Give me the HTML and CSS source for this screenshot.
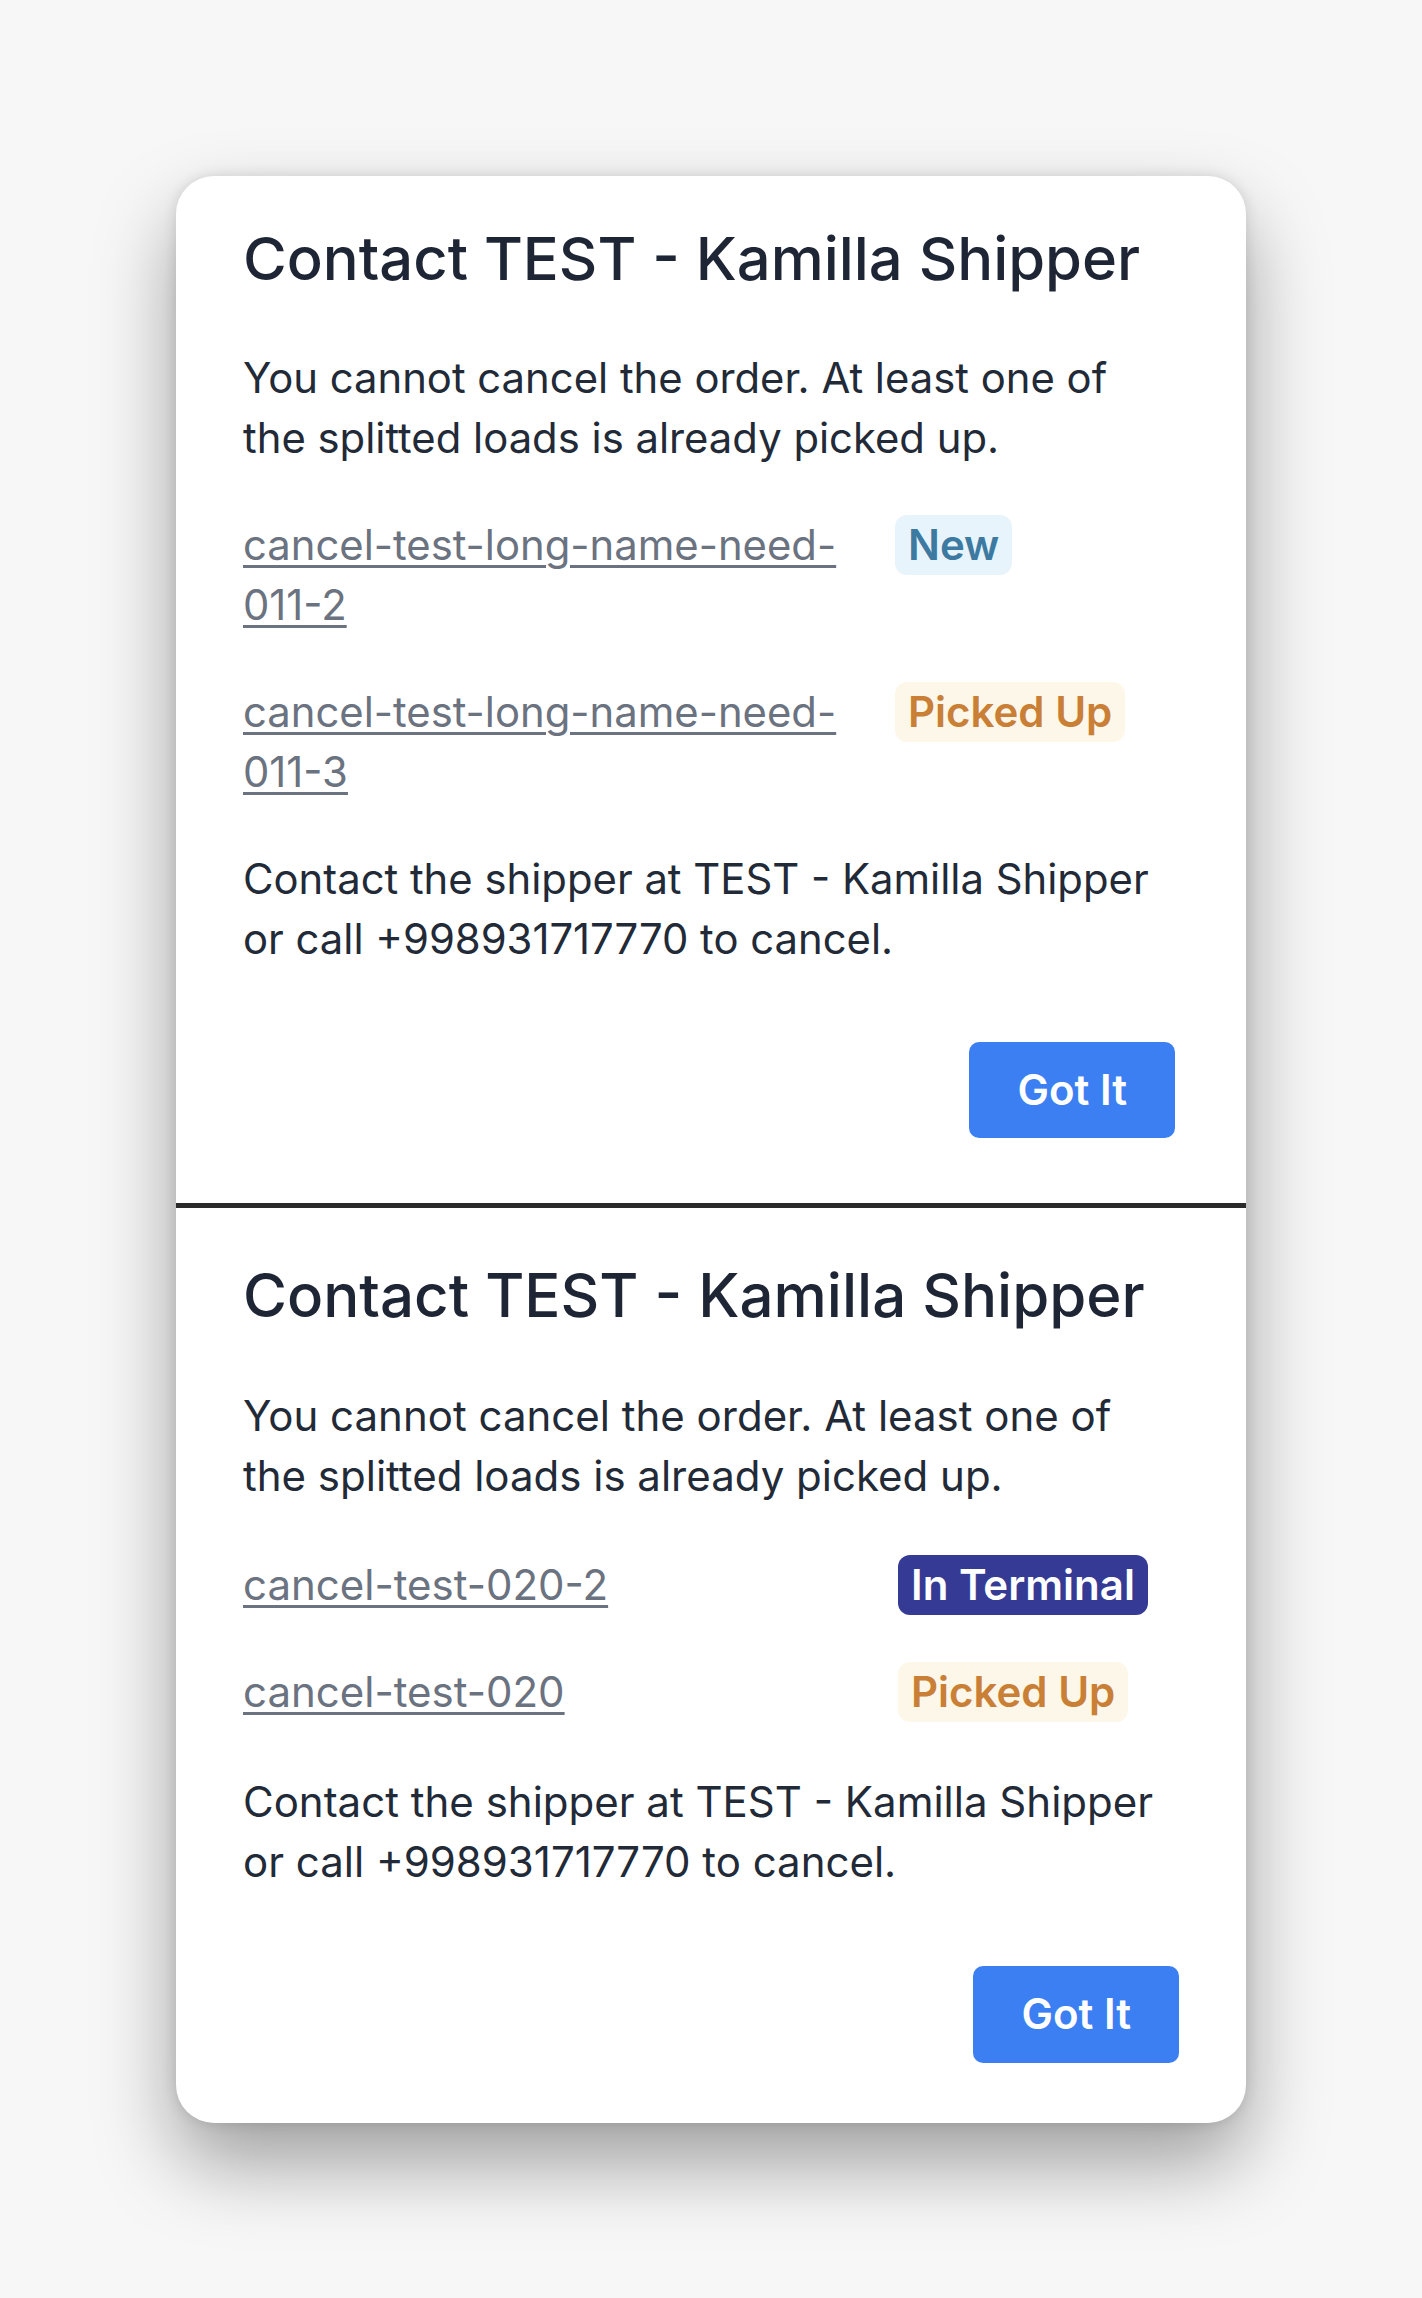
FILE: index.html
```html
<!DOCTYPE html>
<html lang="en">
<head>
<meta charset="utf-8">
<title>Contact TEST - Kamilla Shipper</title>
<link rel="stylesheet" href="styles.css">
</head>
<body>
<main class="page">
  <div class="card">
    <section class="dialog dialog--first">
      <h2 class="dialog-title">Contact TEST - Kamilla Shipper</h2>
      <p class="dialog-text">You cannot cancel the order. At least one of the splitted loads is already picked up.</p>
      <ul class="loads">
        <li class="load-row">
          <a class="load-link" href="#">cancel-test-long-name-need-<wbr>011-2</a>
          <span class="badge badge--new">New</span>
        </li>
        <li class="load-row">
          <a class="load-link" href="#">cancel-test-long-name-need-<wbr>011-3</a>
          <span class="badge badge--picked">Picked Up</span>
        </li>
      </ul>
      <p class="dialog-text dialog-contact">Contact the shipper at TEST - Kamilla Shipper or call +998931717770 to cancel.</p>
      <div class="dialog-actions">
        <button class="btn-primary" type="button">Got It</button>
      </div>
    </section>
    <div class="divider"></div>
    <section class="dialog dialog--second">
      <h2 class="dialog-title">Contact TEST - Kamilla Shipper</h2>
      <p class="dialog-text">You cannot cancel the order. At least one of the splitted loads is already picked up.</p>
      <ul class="loads">
        <li class="load-row">
          <a class="load-link" href="#">cancel-test-020-2</a>
          <span class="badge badge--terminal">In Terminal</span>
        </li>
        <li class="load-row">
          <a class="load-link" href="#">cancel-test-020</a>
          <span class="badge badge--picked">Picked Up</span>
        </li>
      </ul>
      <p class="dialog-text dialog-contact">Contact the shipper at TEST - Kamilla Shipper or call +998931717770 to cancel.</p>
      <div class="dialog-actions">
        <button class="btn-primary" type="button">Got It</button>
      </div>
    </section>
  </div>
</main>
</body>
</html>
```

FILE: styles.css
```css
* {
  box-sizing: border-box;
}

html, body {
  margin: 0;
  padding: 0;
}

body {
  background: #f7f7f7;
  font-family: Inter, "Noto Sans", "Liberation Sans", sans-serif;
  color: #1f2937;
  min-height: 2298px;
}

.page {
  padding-top: 176px;
}

.card {
  width: 1070px;
  margin: 0 auto;
  background: #ffffff;
  border-radius: 38px;
  overflow: hidden;
  box-shadow: 0 40px 80px rgba(0, 0, 0, 0.36), 0 0 14px rgba(0, 0, 0, 0.12);
}

.dialog {
  padding: 46px 71px 65px 67px;
}

.dialog-title {
  margin: 0;
  font-size: 60px;
  line-height: 72px;
  font-weight: 500;
  color: #1e2535;
  letter-spacing: 0;
}

.dialog-text {
  margin: 54px 0 0;
  font-size: 42px;
  line-height: 60px;
  font-weight: 400;
  color: #222a38;
}

.dialog--first .dialog-title {
  font-size: 59.7px;
}

.dialog--first .dialog-text {
  font-size: 41.8px;
}

.loads {
  list-style: none;
  margin: 47px 0 0;
  padding: 0;
  display: grid;
  row-gap: 47px;
}

.load-row {
  display: grid;
  grid-template-columns: 652px auto;
  align-items: start;
  justify-items: start;
}

.load-link {
  font-size: 42px;
  line-height: 60px;
  color: #6b7280;
  text-decoration: underline;
  text-decoration-thickness: 3px;
  text-underline-offset: 5px;
  text-decoration-color: #6b7280;
}

.dialog--first .load-link {
  font-size: 41.8px;
}

.badge {
  display: inline-block;
  padding: 0 13px;
  font-size: 42px;
  line-height: 60px;
  font-weight: 600;
  border-radius: 12px;
  white-space: nowrap;
}

.badge--new {
  background: #e8f4fc;
  color: #3d7aa1;
}

.badge--picked {
  background: #fcf7e8;
  color: #c97f36;
}

.badge--terminal {
  background: #353b95;
  color: #ffffff;
}

.dialog-contact {
  margin-top: 47px;
}

.dialog-actions {
  display: flex;
  justify-content: flex-end;
  margin-top: 73px;
}

.btn-primary {
  font-family: inherit;
  font-size: 42px;
  line-height: 60px;
  font-weight: 600;
  color: #ffffff;
  background: #3b7ff2;
  border: 0;
  border-radius: 10px;
  padding: 18px 48px;
  cursor: pointer;
}

.divider {
  height: 5px;
  background: #2a2a2a;
}

.dialog--second {
  padding: 51px 67px 60px 67px;
}

.dialog--second .dialog-text {
  margin-top: 55px;
}

.dialog--second .loads {
  margin-top: 49px;
}

.dialog--second .load-row {
  grid-template-columns: 655px auto;
}

.dialog--second .dialog-contact {
  margin-top: 50px;
}

.dialog--second .dialog-actions {
  margin-top: 74px;
}

.dialog--second .btn-primary {
  padding: 18px 48px 19px;
}
```
